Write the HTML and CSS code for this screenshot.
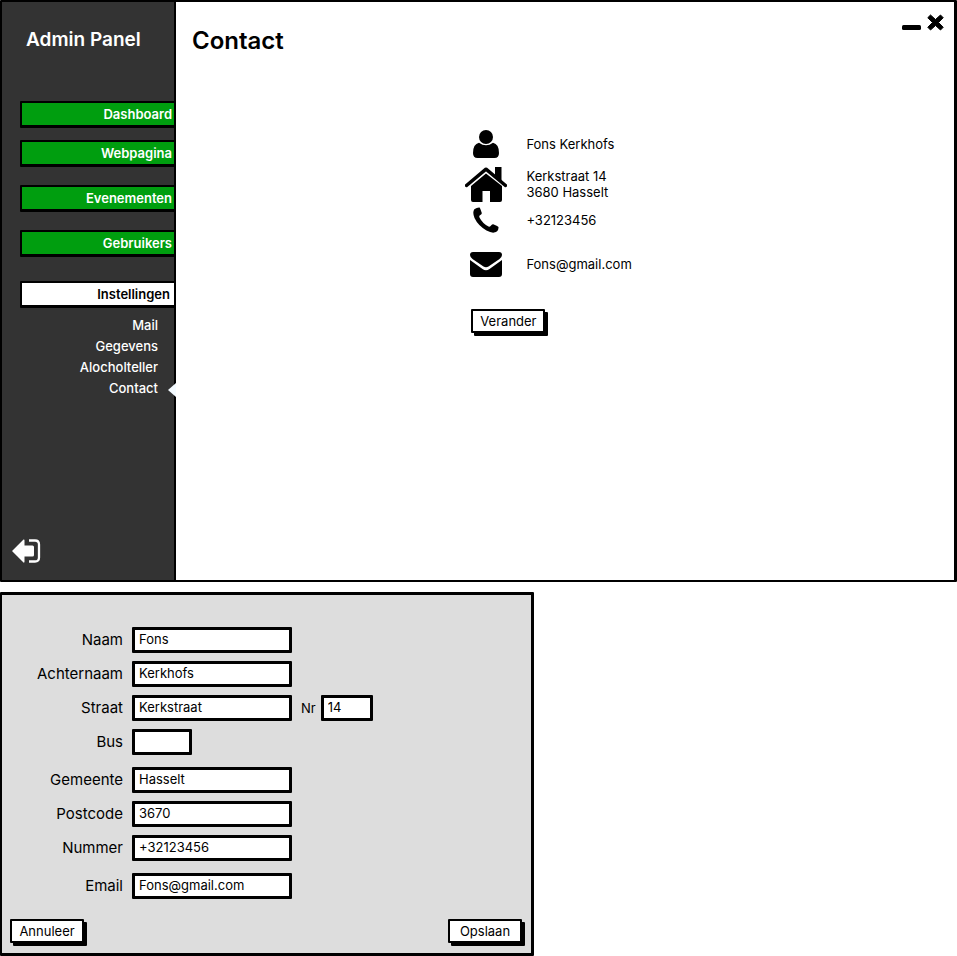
FILE: index.html
```html
<!DOCTYPE html>
<html lang="nl">
<head>
<meta charset="utf-8">
<meta name="viewport" content="width=device-width, initial-scale=1">
<title>Admin Panel - Contact</title>
<link rel="stylesheet" href="styles.css">
</head>
<body>
<div class="window">
  <aside class="sidebar">
    <h2 class="brand">Admin Panel</h2>
    <nav class="menu">
      <a class="menu-item" href="#dashboard">Dashboard</a>
      <a class="menu-item" href="#webpagina">Webpagina</a>
      <a class="menu-item spaced" href="#evenementen">Evenementen</a>
      <a class="menu-item spaced" href="#gebruikers">Gebruikers</a>
      <a class="menu-item section active" href="#instellingen">Instellingen</a>
      <div class="submenu">
        <a href="#mail">Mail</a>
        <a href="#gegevens">Gegevens</a>
        <a href="#alocholteller">Alocholteller</a>
        <a class="current" href="#contact">Contact</a>
      </div>
    </nav>
    <button class="icon-button logout" type="button" aria-label="Afmelden">
      <svg width="29" height="24" viewBox="0 0 29 24"><path d="M0 12 11.500 .5Q12.500 0 12.500 1.500V6.500H20.500Q22 6.500 22 8V16Q22 17.500 20.500 17.500H12.500V22.500Q12.500 24 11.500 23.500Z" fill="#fff"/><path d="M17 1.500H23Q27 1.500 27 5.500V18.500Q27 22.500 23 22.500H17" fill="none" stroke="#fff" stroke-width="2.300"/></svg>
    </button>
  </aside>
  <main class="content">
    <header class="titlebar">
      <h1>Contact</h1>
      <div class="controls">
        <button class="icon-button" type="button" aria-label="Minimaliseren"><svg width="19" height="17" viewBox="0 0 19 17"><rect y="11" width="19" height="5" rx="1.500"/></svg></button>
        <button class="icon-button" type="button" aria-label="Sluiten"><svg width="17" height="17" viewBox="0 0 17 17"><path d="M3.500 1 8.500 5.500 13.500 1 16.200 3.700 11.500 8.500 16.200 13.300 13.500 16 8.500 11.500 3.500 16 .8 13.300 5.500 8.500 .8 3.700Z" stroke="#000" stroke-linejoin="round"/></svg></button>
      </div>
    </header>
    <section class="details">
      <div class="detail">
        <svg width="26" height="28" viewBox="0 0 26 28"><ellipse cx="13" cy="7" rx="7" ry="7"/><path d="M6 12.700Q13 18 20 12.700Q26 14 26 23Q26 28 21.500 28H4.500Q0 28 0 23Q0 14 6 12.700Z"/></svg>
        <span>Fons Kerkhofs</span>
      </div>
      <div class="detail address">
        <svg width="42" height="35" viewBox="0 0 42 35"><path d="M1.500 18.500 21 2.200 40.500 18.500" fill="none" stroke="#000" stroke-width="3.500" stroke-linejoin="round" stroke-linecap="round"/><path d="M30 0H36.500V14L30 8.500ZM6 19 21 6.500 37 19V33Q37 35 35 35H25V24H17.500V35H8Q6 35 6 33Z"/></svg>
        <span>Kerkstraat 14<br>3680 Hasselt</span>
      </div>
      <div class="detail">
        <svg width="26" height="26" viewBox="0 0 26 26"><path d="M1.300 2.200Q4 .2 6.500 .4Q7.300 1 8.800 6Q9 7.300 7 8.300Q5.800 9.200 6.500 10.500Q9.500 16.500 15.500 19.500Q16.800 20 17.800 18.700Q19 16.800 20.200 17.200Q25.400 19.500 25.500 20Q25.700 24.700 21 25.600Q18 26 13.500 23.500Q5 18.500 1.500 11Q-.8 5.500 1.300 2.200Z"/></svg>
        <span>+32123456</span>
      </div>
      <div class="detail mail">
        <svg width="32" height="25" viewBox="0 0 32 25"><path d="M3 0H29Q32 0 32 3Q32 5 29.500 7L18.500 14.500Q16 16 13.500 14.500L2.500 7Q0 5 0 3Q0 0 3 0Z"/><path d="M0 8 12.500 17Q16 19.500 19.500 17L32 8V22Q32 25 29 25H3Q0 25 0 22Z"/></svg>
        <span>Fons@gmail.com</span>
      </div>
      <button class="button change" type="button">Verander</button>
    </section>
  </main>
</div>

<form class="dialog">
  <div class="field"><label for="naam">Naam</label><input id="naam" type="text" value="Fons"></div>
  <div class="field"><label for="achternaam">Achternaam</label><input id="achternaam" type="text" value="Kerkhofs"></div>
  <div class="field"><label for="straat">Straat</label><input id="straat" type="text" value="Kerkstraat"><label class="minor" for="nr">Nr</label><input class="tiny" id="nr" type="text" value="14"></div>
  <div class="field"><label for="bus">Bus</label><input class="small" id="bus" type="text"></div>
  <div class="field apart"><label for="gemeente">Gemeente</label><input id="gemeente" type="text" value="Hasselt"></div>
  <div class="field"><label for="postcode">Postcode</label><input id="postcode" type="text" value="3670"></div>
  <div class="field"><label for="nummer">Nummer</label><input id="nummer" type="tel" value="+32123456"></div>
  <div class="field apart"><label for="email">Email</label><input id="email" type="text" value="Fons@gmail.com"></div>
  <div class="actions">
    <button class="button" type="button">Annuleer</button>
    <button class="button" type="button">Opslaan</button>
  </div>
</form>
</body>
</html>
```
FILE: styles.css
```css
* { box-sizing: border-box; }

body {
  margin: 0;
  background: #fff;
  color: #000;
  font: 13px/16px Inter, "Liberation Sans", sans-serif;
}

h1, h2 { margin: 0; font-weight: 600; }
a { color: inherit; text-decoration: none; }
svg { display: block; }
input, button { font: inherit; color: inherit; }

.window {
  display: flex;
  min-height: 582px;
  border: 2px solid #000;
  border-right-width: 3px;
  border-radius: 1px;
}

/* Sidebar */
.sidebar {
  display: flex;
  flex-direction: column;
  width: 174px;
  flex: none;
  background: #333;
  color: #fff;
  border-right: 2px solid #000;
}

.brand {
  padding: 26px 0 0 24px;
  font-size: 19px;
  line-height: 24px;
}

.menu {
  display: flex;
  flex-direction: column;
  margin: 49px -2px 0 18px;
}

.menu-item {
  height: 27px;
  margin-bottom: 12px;
  padding-right: 2px;
  border: 2px solid #000;
  border-bottom-width: 3px;
  border-radius: 1px;
  background: #009e0f;
  font-weight: 600;
  line-height: 22px;
  text-align: right;
}

.menu-item.spaced { margin-top: 6px; }
.menu-item.section { margin-top: 12px; }

.menu-item.active {
  margin-bottom: 7px;
  padding-right: 4px;
  background: #fff;
  color: #000;
}

.submenu {
  display: flex;
  flex-direction: column;
  padding-right: 18px;
  font-weight: 500;
  line-height: 21px;
  text-align: right;
}

.submenu .current { position: relative; }

.submenu .current::after {
  content: "";
  position: absolute;
  top: 5px;
  right: -18px;
  border: 7px solid transparent;
  border-left: 0;
  border-right: 8px solid #f4faff;
}

.icon-button {
  padding: 0;
  border: 0;
  background: none;
}

.logout {
  align-self: flex-start;
  margin: auto 0 17px 10px;
}

/* Contact page */
.content { flex: 1; }

.titlebar {
  display: flex;
  justify-content: space-between;
  padding: 12px 10px 0 16px;
}

.titlebar h1 {
  padding-top: 13px;
  font-size: 24px;
  line-height: 28px;
}

.controls {
  display: flex;
  align-items: flex-start;
  gap: 6px;
}

.details {
  display: flex;
  flex-direction: column;
  margin: 73px 0 0 37.2%;
}

.detail {
  display: grid;
  grid-template-columns: 42px 1fr;
  gap: 19px;
  align-items: center;
  height: 32px;
}

.detail svg { justify-self: center; }
.detail.address { height: 40px; margin-top: 4px; }
.detail.mail { margin-top: 12px; }

.button {
  width: 74px;
  height: 24px;
  padding: 0;
  border: 2px solid #000;
  border-radius: 1px;
  background: #fff;
  box-shadow: 3px 3px 0 #000;
}

.change { margin: 29px 0 0 6px; }

/* Contact form */
.dialog {
  display: flex;
  flex-direction: column;
  gap: 8px;
  width: 55.8%;
  min-width: 400px;
  margin-top: 10px;
  padding: 32px 9px 10px 8px;
  border: 3px solid #000;
  border-left-width: 2px;
  border-radius: 1px;
  background: #ddd;
}

.field {
  display: grid;
  grid-template-columns: 113px 160px auto auto 1fr;
  gap: 9px;
  align-items: center;
}

.field.apart { margin-top: 4px; }

.field label {
  font-size: 15px;
  line-height: 24px;
  text-align: right;
}

.field label.minor {
  margin-right: -4px;
  font-size: 13px;
}

.field input {
  width: 100%;
  height: 26px;
  padding: 0 4px 2px;
  border: 3px solid #000;
  border-radius: 1px;
  background: #fff;
}

.field input.small { width: 60px; }
.field input.tiny { width: 52px; }

.actions {
  display: flex;
  justify-content: space-between;
  margin-top: 12px;
}
```
